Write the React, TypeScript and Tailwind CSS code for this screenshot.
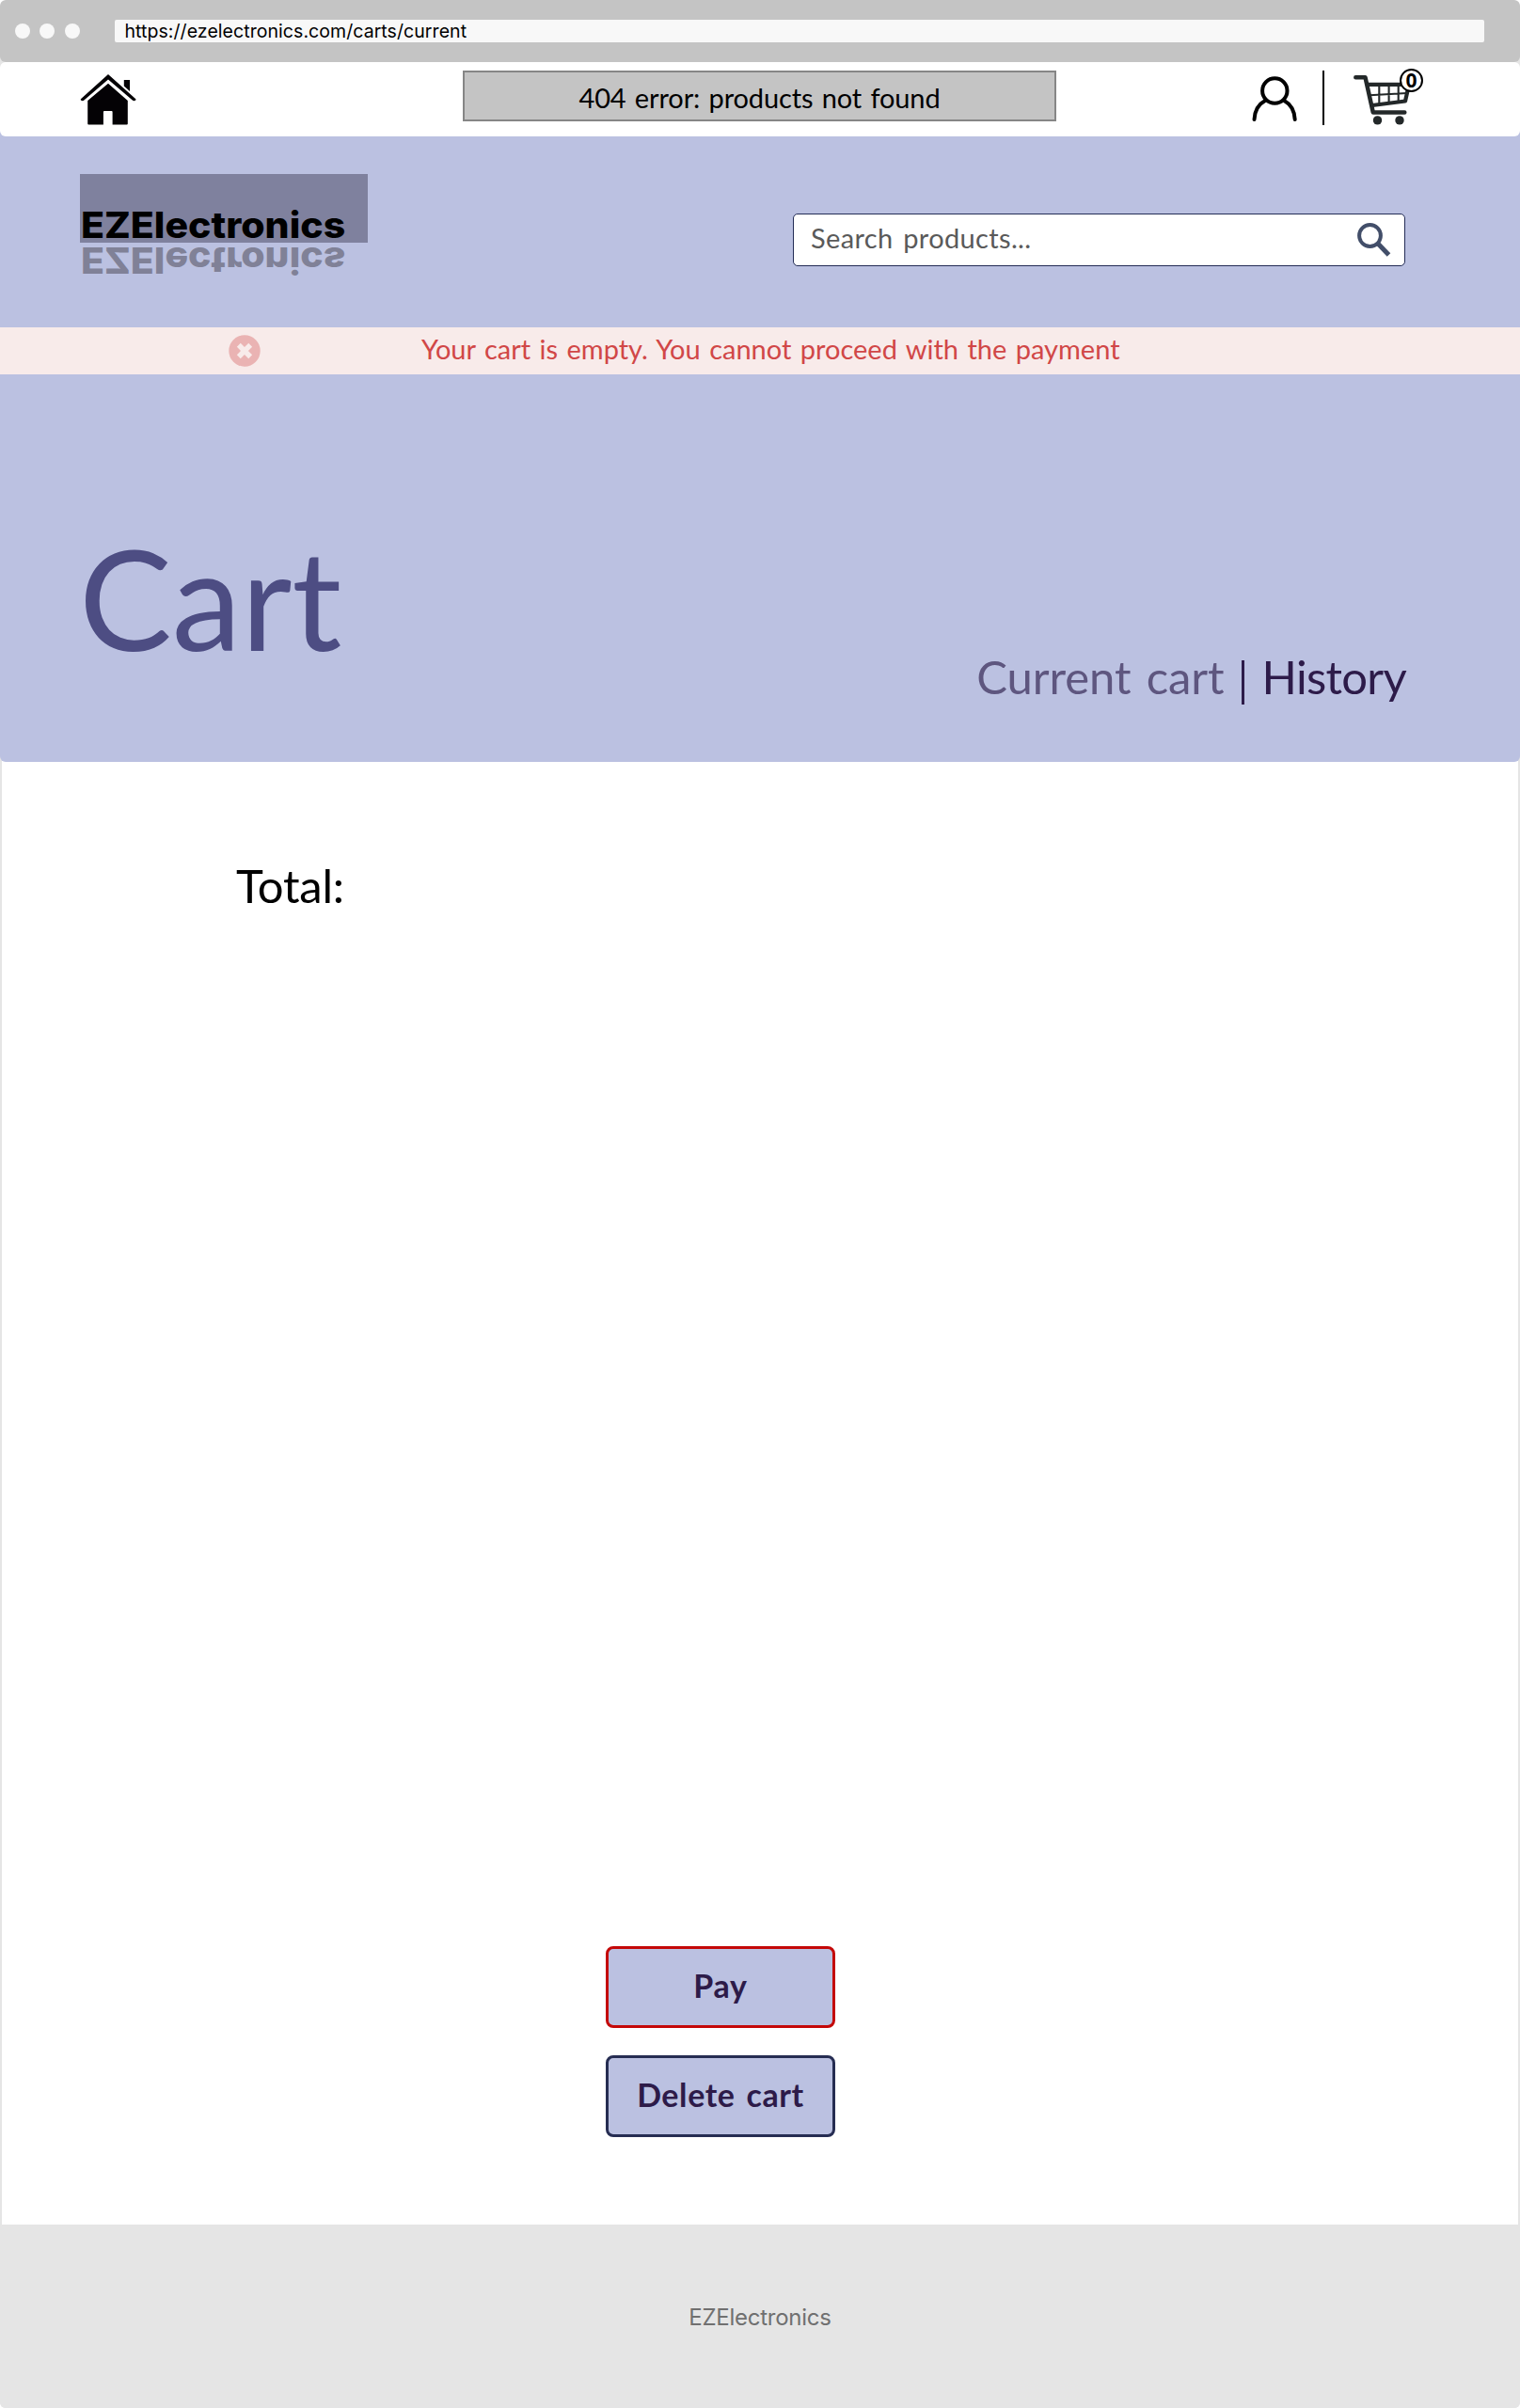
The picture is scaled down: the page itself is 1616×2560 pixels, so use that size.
function HomeIcon() {
  return (
    <svg viewBox="0 0 60 54" className="h-[54px] w-[60px]" fill="#040205">
      <path d="M30 0 59.3 26.2q.6.8-.3 1.5-1.8 1-3.2-.2L30 5.4 4.4 27.6q-1.300 1-3.200.2-.9-.8-.300-1.600Z" />
      <path d="M46.800 6H53v12l-6.200-5.500Z" />
      <path d="M30 9.800 50.800 28v24.500q0 1-1 1H34.600V40q0-1-1-1h-7.700q-1 0-1 1v13.500H9.200q-1 0-1-1V28Z" />
    </svg>
  );
}

function UserIcon() {
  return (
    <svg viewBox="0 0 48 48" className="h-12 w-12" fill="none" stroke="#000" strokeWidth="4" strokeLinecap="round">
      <circle cx="24.300" cy="15.500" r="13.200" />
      <path d="M2.500 46C3 36.500 7.500 29.500 14 26M45.700 46C45.200 36.500 40.700 29.500 34.300 26" />
    </svg>
  );
}

function CartIcon() {
  return (
    <svg viewBox="0 0 62 54" className="h-[54px] w-[62px]" fill="none" stroke="#232829" strokeLinecap="round" strokeLinejoin="round">
      <path d="M2.300 3.200H12.500L20.800 40.500H54.300" strokeWidth="4.500" />
      <path d="M15 10.800H59L55 28.500 20 33" strokeWidth="4.200" />
      <path d="M17 22.300 57 20M27.300 11V31M37.600 11V30M47.700 11V29" strokeWidth="2.100" />
      <circle cx="25.500" cy="48.900" r="4.700" fill="#232829" stroke="none" />
      <circle cx="49" cy="48.900" r="4.700" fill="#232829" stroke="none" />
    </svg>
  );
}

function SearchIcon() {
  return (
    <svg viewBox="0 0 36 36" className="h-9 w-9" fill="none" stroke="#424e69">
      <circle cx="13.500" cy="13.500" r="11.400" strokeWidth="4" />
      <path d="M22 22 33.500 34" strokeWidth="5" />
    </svg>
  );
}

function ErrorIcon() {
  return (
    <svg viewBox="0 0 34 34" className="h-[34px] w-[34px]">
      <circle cx="17" cy="17" r="16.700" fill="#eab3b3" />
      <path d="M10.800 10.800 23.200 23.200M23.200 10.800 10.800 23.200" stroke="#f8ebea" strokeWidth="5.500" />
    </svg>
  );
}

function Logo() {
  return (
    <div className="h-[110px] w-[306px] whitespace-nowrap font-['Inter',sans-serif] text-[38.500px] font-extrabold leading-[38px]">
      <div className="flex h-[73px] items-end bg-[#7f819e] pl-[1px]">
        <span className="block origin-left scale-x-[1.065] text-black">EZElectronics</span>
      </div>
      <div className="flex h-[37px] items-start pl-[1px]">
        <span className="block origin-left scale-x-[1.065] -scale-y-100 text-[#808197]">EZElectronics</span>
      </div>
    </div>
  );
}

export default function App() {
  return (
    <div className="flex h-[2560px] w-[1616px] flex-col overflow-hidden rounded-md bg-[#e5e5e5] font-['Lato',sans-serif]">
      <div className="flex h-[66px] shrink-0 items-center rounded-md bg-[#c4c4c4] pl-[15.500px]">
        <div className="flex gap-[10.500px]">
          <i className="size-4 rounded-full bg-[#f8f8f8]" />
          <i className="size-4 rounded-full bg-[#f8f8f8]" />
          <i className="size-4 rounded-full bg-[#f8f8f8]" />
        </div>
        <div className="ml-[37px] flex h-6 w-[1456px] items-center rounded-xs bg-[#f8f8f8] pl-[11px] font-['Inter',sans-serif] text-[19.500px] leading-6 tracking-[0.060px] text-black">
          https://ezelectronics.com/carts/current
        </div>
      </div>

      <nav className="relative z-10 flex h-[79px] shrink-0 items-start rounded-md bg-white pl-[85px]">
        <div className="mt-[13px]"><HomeIcon /></div>
        <div className="ml-[347px] mt-[9px] flex h-[54px] w-[631px] items-center justify-center border-2 border-[#868686] bg-[#c4c4c4] pt-[3px] text-[29px] leading-none tracking-[-0.120px] text-black [word-spacing:2px]">
          404 error: products not found
        </div>
        <div className="ml-[208px] mt-[15px]"><UserIcon /></div>
        <div className="ml-[27px] mt-[9px] h-[58px] w-[2px] bg-black" />
        <div className="relative ml-[31px] mt-[13px]">
          <CartIcon />
          <span className="absolute -top-[6px] left-[49px] flex size-[25px] items-center justify-center rounded-full border-2 border-black bg-white font-['Open_Sans',sans-serif] text-[21px] font-bold leading-none text-black">
            0
          </span>
        </div>
      </nav>

      <header className="relative z-[5] -mt-[6px] flex h-[671px] shrink-0 flex-col rounded-b-md bg-[#bbc1e1]">
        <div className="flex h-[209px] items-start justify-between pl-[85px] pr-[122px]">
          <div className="mt-[46px]"><Logo /></div>
          <div className="mt-[88px] flex h-[56px] w-[651px] items-center justify-between rounded-[5px] border border-[#232c56] bg-white pl-[18px] pr-[14px]">
            <span className="pb-[5px] text-[29px] leading-none tracking-[0.350px] text-[#5a5a5a] [word-spacing:3px]">Search products...</span>
            <SearchIcon />
          </div>
        </div>
        <div className="flex h-[50px] items-center bg-[#f8ebea] pl-[243px]">
          <ErrorIcon />
          <p className="ml-[171px] pb-[5px] text-[29px] leading-none text-[#d14747] [word-spacing:2px]">
            Your cart is empty. You cannot proceed with the payment
          </p>
        </div>
        <div className="flex justify-between pl-[84px] pr-[121px]">
          <h1 className="mt-[163px] text-[148px] leading-[148px] text-[#4d4d83]">Cart</h1>
          <div className="mt-[296px] flex h-[50px] items-center text-[49px] leading-[50px] text-[#2d1b49]">
            <span className="tracking-[-0.100px] text-[#5e567f] [word-spacing:4px]">Current cart</span>
            <i className="ml-[18px] mt-[12px] h-[47px] w-[3px] bg-[#2d1b49]" />
            <span className="ml-[19px] tracking-[-0.700px]">History</span>
          </div>
        </div>
      </header>

      <main className="-mt-[6px] flex h-[1561px] shrink-0 flex-col border-x-2 border-[#e5e5e5] bg-white">
        <p className="ml-[249px] mt-[112px] text-[49px] leading-[50px] tracking-[-0.200px] text-black">Total:</p>
        <div className="ml-[642px] mt-[1103px] flex w-[244px] flex-col gap-[29px]">
          <button className="h-[87px] rounded-lg border-3 border-[#c40808] bg-[#bbc1e1] pb-1 text-[34px] font-bold leading-none tracking-[0.800px] text-[#2d1b49]">Pay</button>
          <button className="h-[87px] rounded-lg border-3 border-[#262d52] bg-[#bbc1e1] pb-1 text-[34px] font-bold leading-none tracking-[0.600px] text-[#2d1b49] [word-spacing:3px]">Delete cart</button>
        </div>
      </main>

      <footer className="flex h-[195px] shrink-0 items-center justify-center bg-[#e5e5e5] pt-[2px] font-['Inter',sans-serif] text-[24px] leading-none tracking-[-0.250px] text-[#707070]">
        EZElectronics
      </footer>
    </div>
  );
}
